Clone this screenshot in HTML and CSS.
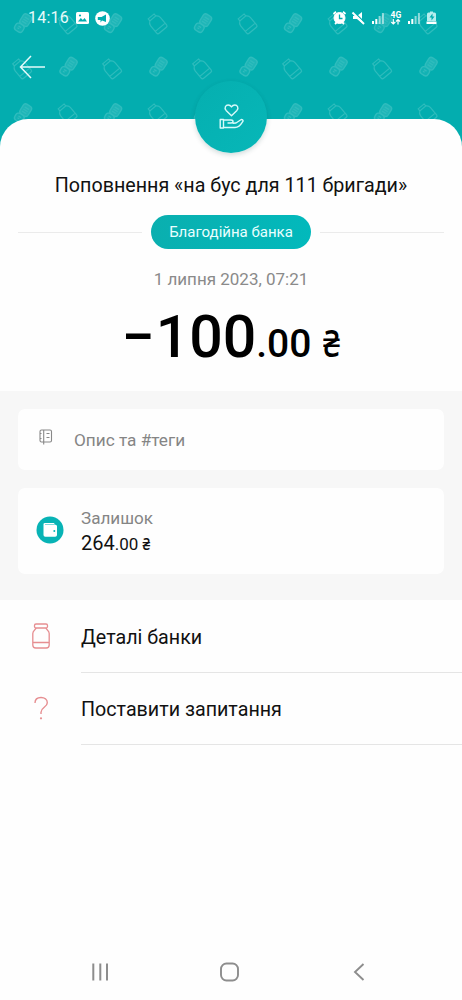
FILE: index.html
```html
<!DOCTYPE html>
<html lang="uk">
<head>
<meta charset="utf-8">
<meta name="viewport" content="width=device-width, initial-scale=1">
<title>Благодійна банка</title>
<link rel="stylesheet" href="styles.css">
</head>
<body>
<div class="screen">
  <svg class="backdrop" width="462" height="160" aria-hidden="true">
    <defs>
      <pattern id="doodles" width="90" height="90" patternUnits="userSpaceOnUse">
        <g id="card" transform="translate(23 23.5) rotate(32)">
          <rect x="-4.200" y="-10" width="9.400" height="11.500" rx="3" fill="#1fb6b8"/>
          <path d="M-2-6.500h5M-2-4h5M-2-1.500h5"/>
          <rect x="-5.400" y="1.500" width="9" height="8" rx="3" fill="#12b2b4"/>
          <path d="M-2.500 4.500h3M-2.500 6.500h2"/>
        </g>
        <g id="jar" transform="translate(67.500 24) rotate(-40) scale(.86)">
          <path d="M-4.500-11.500h9v3h-9zM-4.500-8.500c-1.500 1-3 2.500-3 5V7.500q0 2 2 2h11q2 0 2-2V-3.500c0-2.500-1.500-4-3-5M-7.500 5h15"/>
        </g>
        <use href="#card" x="45.500" y="43.500"/>
        <use href="#jar" x="-45.500" y="45"/>
      </pattern>
    </defs>
    <rect width="462" height="160" fill="url(#doodles)"/>
  </svg>

  <header class="header">
    <div class="status">
      <span class="clock">14:16</span>
      <svg class="status-picture" width="13" height="12" viewBox="0 0 13 12"><rect width="13" height="12" rx="1.500" fill="#fff"/><path d="M2 9.500 4.800 6l2 2 1.800-2L11 9.500z" fill="#03adaf"/><circle cx="4" cy="3.500" r="1.100" fill="#03adaf"/></svg>
      <svg class="status-send" width="15" height="15" viewBox="0 0 15 15"><circle cx="7.500" cy="7.500" r="7.300" fill="#fff"/><path d="M2.800 6H6.500L11 3.500V11L7 9.500 5.500 11.500V9H2.800z" fill="#03adaf"/></svg>
      <svg class="status-system" width="106" height="18" viewBox="0 0 106 18">
        <g fill="none" stroke="#fff">
          <circle cx="7.500" cy="9" r="5.500" fill="#fff"/>
          <path d="M1.500 5 4 2.800M13.500 5 11 2.800M3 15l1.500-1.500M12 15l-1.500-1.500" stroke-width="1.800"/>
          <path d="M7.500 5.500V9.500h3" stroke="#03adaf" stroke-width="1.300"/>
        </g>
        <path d="M21 7h4l5-4V14l-5-4h-4z" fill="#fff"/>
        <path d="M21.500 2.500l11 11" stroke="#03adaf" stroke-width="1.400"/><path d="M20.500 3.500 32 15" stroke="#fff" stroke-width="2"/>
        <g fill="#fff"><path d="M40 12h2v3h-2zM43.300 10h2v5h-2z"/><path d="M46.600 7h2v8h-2zM49.900 4h2v11h-2z" opacity=".55"/></g>
        <text class="network" x="58.500" y="8.500">4G</text>
        <path d="M61.300 10v5M59.300 13l2 2 2-2M66 15.500v-5M64 12.500l2-2 2 2" fill="none" stroke="#fff" stroke-width="1.200"/>
        <g fill="#fff"><path d="M76 12h2v3h-2zM79.300 10h2v5h-2z"/><path d="M82.600 7h2v8h-2zM85.900 4h2v11h-2z" opacity=".55"/></g>
        <path d="M96.500 3.500h1.500V2.500h3v1h1.500q1.500 0 1.500 1.500v7h-9V5q0-1.500 1.500-1.500z" fill="#b6eeee"/>
        <path d="M94.500 12.500h10V15h-10z" fill="#fff"/><path d="m100.500 4.500-3 4h2v3l3-4h-2z" fill="#03adaf"/>
      </svg>
    </div>
    <svg class="back" width="27" height="24" viewBox="0 0 27 24"><path d="M26 12H1.500M12 1 1.500 12 12 23" fill="none" stroke="#e4fafa" stroke-width="1.500"/></svg>
  </header>

  <main class="sheet">
    <section class="summary">
      <div class="emblem">
        <svg width="26" height="28" viewBox="0 0 26 28" fill="none" stroke="#d9fafa" stroke-width="1.400" stroke-linejoin="round" stroke-linecap="round">
          <path d="M13.500 12.800 8.100 7.400C5.800 4.800 7.800 2 10.200 2c1.500 0 2.600.8 3.300 1.900C14.200 2.800 15.300 2 16.800 2c2.400 0 4.400 2.800 2.100 5.400z"/>
          <path d="M2.200 16.500H5.500V25H2.200zM5.500 17h7.500q2 0 2 1.500T13 20H10M15 20.300l3-.3 4.500-3c1.500-1 3.200.1 2.200 1.600-1.800 3-4.200 5.900-7.700 5.900H5.500"/>
        </svg>
      </div>
      <h1 class="title">Поповнення «на бус для 111 бригади»</h1>
      <div class="category"><span class="chip">Благодійна банка</span></div>
      <time class="date">1 липня 2023, 07:21</time>
      <div class="amount"><span class="minus">−</span><span class="whole">100</span><span class="cents">.00</span><span class="currency">₴</span></div>
    </section>

    <section class="cards">
      <div class="note card">
        <svg class="note-icon" width="14" height="16" viewBox="0 0 14 16" fill="none" stroke="#888" stroke-width="1.100"><rect x="1" y="1" width="11.500" height="12" rx="1.500"/><path d="M4.700 1v14.500M7.500 4.500h3M7.500 8.500h3M1 4.500h1.500M1 9.500h1.500"/></svg>
        <span>Опис та #теги</span>
      </div>
      <div class="balance card">
        <svg class="wallet" width="28" height="28" viewBox="0 0 28 28"><circle cx="14" cy="14" r="13.500" fill="#08b3b5"/><path d="M7.500 8q0-1 1.500-1h8.500q1 0 1 1v.7h1q1.500 0 1.500 1.500V19q0 1.800-1.800 1.800H9.300q-1.800 0-1.800-1.800z" fill="#fff"/><path d="M9 8.500h9.500" stroke="#61cfd0" stroke-width=".8"/><circle cx="18.300" cy="15" r="1" fill="#08b3b5"/></svg>
        <div>
          <div class="label">Залишок</div>
          <div class="value">264<span class="value-small">.00</span><span class="value-currency">₴</span></div>
        </div>
      </div>
    </section>

    <nav class="actions">
      <div class="action">
        <svg class="action-icon" width="20" height="28" viewBox="0 0 20 28" fill="none" stroke="#e68e91" stroke-width="1.300"><rect x="3.500" y="2" width="13" height="4" rx="1.500"/><path d="M5 6C4.500 8 1.800 8.300 1.800 11.500V23q0 3 3 3h10.400q3 0 3-3V11.500C18.200 8.300 15.500 8 15 6M1.800 20.500h16.400"/></svg>
        <div class="action-label">Деталі банки</div>
      </div>
      <div class="action">
        <svg class="action-icon" width="20" height="28" viewBox="0 0 20 28"><path d="M4 9C4 5.500 6.500 3.500 10 3.500s6.300 2 6.300 5.200c0 4.600-6.300 4.600-6.300 9.500V20" fill="none" stroke="#e68e91" stroke-width="1.400"/><circle cx="10" cy="24.300" r="1.100" fill="#e68e91"/></svg>
        <div class="action-label">Поставити запитання</div>
      </div>
    </nav>
  </main>

  <footer class="navbar">
    <svg width="18" height="20" viewBox="0 0 18 20"><path d="M2.300 1.500v17M9.300 1.500v17M16 1.500v17" stroke="#8d8d8d" stroke-width="2"/></svg>
    <svg width="22" height="20" viewBox="0 0 22 20"><rect x="1" y="1.500" width="17" height="17" rx="5.500" fill="none" stroke="#8d8d8d" stroke-width="1.900"/></svg>
    <svg width="12" height="20" viewBox="0 0 12 20"><path d="M10.500 2 2 10l8.500 8" fill="none" stroke="#8d8d8d" stroke-width="1.900"/></svg>
  </footer>
</div>
</body>
</html>
```
FILE: styles.css
```css
* { box-sizing: border-box; }

body {
  margin: 0;
  font-family: Roboto, "Liberation Sans", sans-serif;
  color: #111;
  background: #fefefe;
}

svg { display: block; flex: none; }

.screen {
  position: relative;
  display: flex;
  flex-direction: column;
  width: 462px;
  height: 1000px;
  overflow: hidden;
}

.backdrop {
  position: absolute;
  top: 0;
  left: 0;
  background: #03adaf;
}

.backdrop pattern {
  fill: none;
  stroke: #2fbcbd;
  stroke-width: 1.3;
}

.header {
  position: relative;
  height: 119px;
  padding: 9px 24px 0 28px;
}

.status {
  display: flex;
  align-items: center;
  height: 18px;
}

.clock {
  font-size: 16px;
  line-height: 18px;
  color: #e8fbfb;
  letter-spacing: 0.2px;
}

.status-picture { margin-left: 7px; }
.status-send { margin-left: 6px; }
.status-system { margin-left: auto; }

.network {
  font-size: 8.5px;
  font-weight: 700;
  fill: #fff;
}

.back { margin: 28px 0 0 -9px; }

.sheet {
  position: relative;
  flex: 1;
  background: #fefefe;
  border-radius: 28px 28px 0 0;
}

.summary {
  display: flex;
  flex-direction: column;
  align-items: center;
  height: 272px;
}

.emblem {
  display: flex;
  align-items: center;
  justify-content: center;
  width: 72px;
  height: 72px;
  margin-top: -38px;
  border-radius: 50%;
  background: linear-gradient(135deg, #05afb0, #07b7b8);
  box-shadow: 0 2px 5px rgba(0, 60, 60, 0.18);
}

.title {
  margin: 21px 0 0;
  font-size: 19.7px;
  line-height: 24px;
  font-weight: 400;
  white-space: nowrap;
}

.category {
  display: flex;
  align-items: center;
  gap: 9px;
  width: 426px;
  margin-top: 17px;
}

.category::before,
.category::after {
  content: "";
  flex: 1;
  height: 1px;
  background: #ebebeb;
}

.chip {
  width: 160px;
  height: 34px;
  border-radius: 17px;
  background: linear-gradient(100deg, #0aafaf, #02b9bc);
  color: #eaffff;
  font-size: 15px;
  line-height: 34px;
  text-align: center;
}

.date {
  margin-top: 20px;
  font-size: 17px;
  line-height: 20px;
  color: #8a8a8a;
}

.amount {
  display: flex;
  align-items: baseline;
  margin-top: 12px;
  color: #000;
  font-weight: 500;
  line-height: 72px;
}

.minus { font-size: 59px; }
.whole { font-size: 59px; margin-left: 1px; }
.cents { font-size: 39px; }

.currency {
  margin: 0 -2px 0 10px;
  font-family: "Noto Sans", sans-serif;
  font-size: 38px;
  font-weight: 500;
  transform: scaleX(0.8);
}

.cards {
  display: flex;
  flex-direction: column;
  gap: 18px;
  height: 209px;
  padding: 18px;
  background: #f7f7f7;
}

.card {
  display: flex;
  border-radius: 7px;
  background: #fefefe;
}

.note {
  height: 61px;
  padding: 20px 21px;
  gap: 21px;
  font-size: 17.2px;
  line-height: 23px;
  color: #858585;
}

.balance {
  height: 86px;
  padding: 18px;
  gap: 17px;
}

.wallet { margin-top: 10px; }
.label { font-size: 17.1px; line-height: 25px; color: #858585; }
.value { font-size: 20px; line-height: 25px; }
.value-small { font-size: 17px; }

.value-currency {
  display: inline-block;
  margin-left: 4px;
  font-family: "Noto Sans", sans-serif;
  font-size: 16px;
  font-weight: 500;
  line-height: 1;
  transform: scaleX(0.86);
}

.action {
  display: flex;
  gap: 30px;
  height: 72px;
  padding-left: 31px;
}

.action-icon { margin-top: 22px; }

.action-label {
  flex: 1;
  height: 73px;
  border-bottom: 1px solid #e5e5e5;
  font-size: 19.7px;
  line-height: 75px;
}

.navbar {
  position: relative;
  display: flex;
  align-items: center;
  justify-content: space-between;
  height: 56px;
  padding: 0 97px 0 91px;
}
```
